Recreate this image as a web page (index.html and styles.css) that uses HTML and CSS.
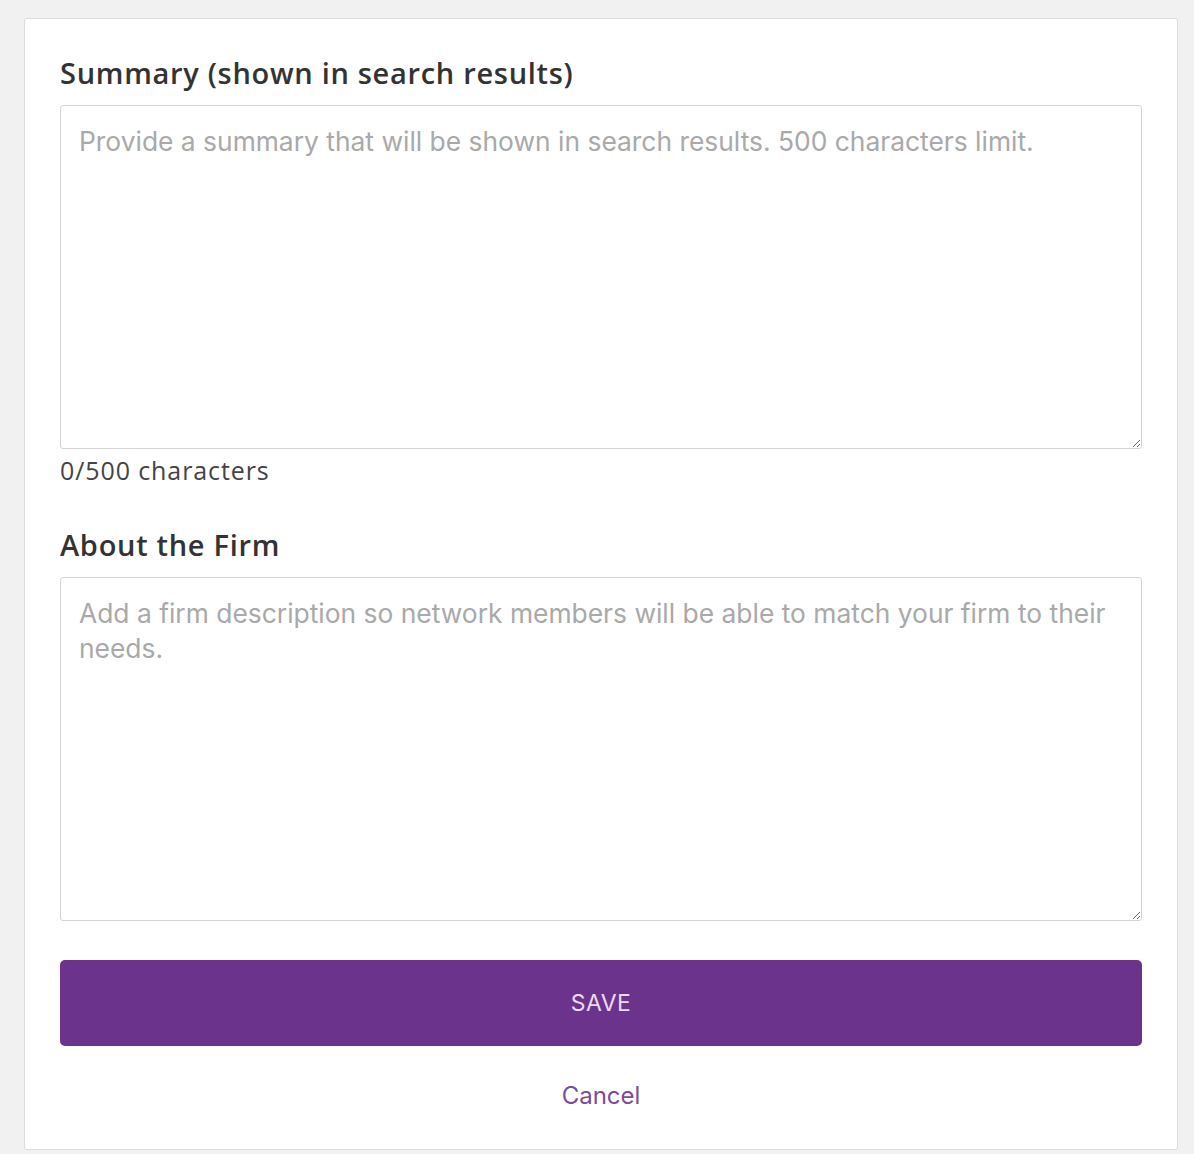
FILE: index.html
```html
<!DOCTYPE html>
<html>
<head>
<meta charset="utf-8">
<link rel="stylesheet" href="styles.css">
</head>
<body>
<div class="card">
  <label class="label" for="summary">Summary (shown in search results)</label>
  <textarea id="summary" class="field" placeholder="Provide a summary that will be shown in search results. 500 characters limit."></textarea>
  <div class="count">0/500 characters</div>
  <label class="label second" for="about">About the Firm</label>
  <textarea id="about" class="field" placeholder="Add a firm description so network members will be able to match your firm to their needs."></textarea>
  <button class="save">SAVE</button>
  <a class="cancel" href="#">Cancel</a>
</div>
</body>
</html>
```
FILE: styles.css
```css
html, body {
  margin: 0;
  padding: 0;
  background: #f1f1f1;
}
body {
  padding: 18px 16px 4px 24px;
  box-sizing: border-box;
  height: 1154px;
  overflow: hidden;
}
.card {
  background: #fff;
  border: 1px solid #dcdcdc;
  border-radius: 3px;
  height: 1132px;
  box-sizing: border-box;
  padding: 35px 35px 0 35px;
  display: flex;
  flex-direction: column;
  font-family: "Open Sans", "Liberation Sans", sans-serif;
}
.label {
  font-size: 29px;
  font-weight: 600;
  letter-spacing: 0.7px;
  color: #333;
  line-height: 38px;
  margin-bottom: 13px;
}
.label.second {
  margin-top: 41px;
}
.field {
  display: block;
  width: 100%;
  height: 344px;
  box-sizing: border-box;
  border: 1px solid #d4d4d4;
  border-radius: 3px;
  padding: 18px 18px;
  font-family: Inter, "Liberation Sans", sans-serif;
  font-size: 26.4px;
  line-height: 35px;
  color: #333;
  resize: vertical;
  margin: 0;
}
.field::placeholder {
  color: #a9a9a9;
}
.count {
  font-size: 25px;
  letter-spacing: 0.9px;
  color: #444;
  line-height: 30px;
  margin-top: 6px;
}
.save {
  margin-top: 39px;
  flex: none;
  height: 86px;
  width: 100%;
  background: #6c338c;
  border: none;
  border-radius: 5px;
  color: #eadaf2;
  font-family: Inter, "Liberation Sans", sans-serif;
  font-size: 23px;
  letter-spacing: 0.5px;
}
.cancel {
  align-self: center;
  margin-top: 36px;
  line-height: 28px;
  color: #7a4b9b;
  font-family: Inter, "Liberation Sans", sans-serif;
  font-size: 24px;
  text-decoration: none;
}
```
